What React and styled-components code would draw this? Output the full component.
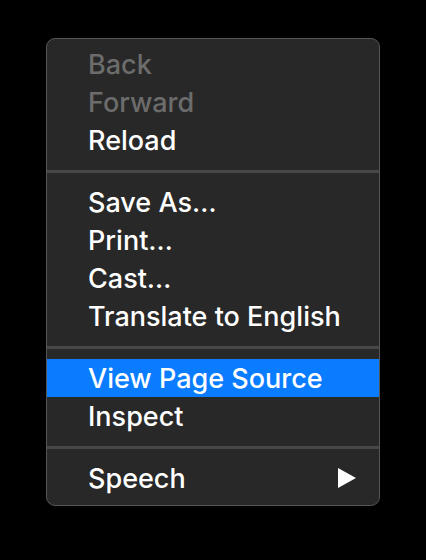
import React from 'react';
import styled, { createGlobalStyle } from 'styled-components';

const GlobalStyle = createGlobalStyle`
  html, body {
    margin: 0;
    padding: 0;
    background: #000;
  }
  body {
    font-family: Inter, "Liberation Sans", sans-serif;
  }
`;

const Page = styled.div`
  width: 426px;
  height: 560px;
  padding: 38px 0 0 46px;
  box-sizing: border-box;
`;

const Menu = styled.div`
  width: 334px;
  box-sizing: border-box;
  background: #282828;
  border: 1px solid #555;
  border-radius: 9px;
  padding: 6px 0 8px;
  display: flex;
  flex-direction: column;
  overflow: hidden;
`;

const Item = styled.div`
  height: 38px;
  display: flex;
  align-items: center;
  justify-content: space-between;
  padding: 0 23px 0 41px;
  font-size: 27px;
  font-weight: 500;
  color: ${p => (p.disabled ? '#6c6c6c' : '#fff')};
  background: ${p => (p.active ? '#0a7cff' : 'transparent')};
  white-space: nowrap;
`;

const Separator = styled.div`
  height: 3px;
  margin: 11px 0 10px;
  background: #474747;
`;

const Arrow = () => (
  <svg width="18" height="20" viewBox="0 0 18 20">
    <polygon points="0,0 18,10 0,20" fill="#fff" />
  </svg>
);

const groups = [
  [
    { label: 'Back', disabled: true },
    { label: 'Forward', disabled: true },
    { label: 'Reload' },
  ],
  [
    { label: 'Save As…' },
    { label: 'Print…' },
    { label: 'Cast…' },
    { label: 'Translate to English' },
  ],
  [
    { label: 'View Page Source', active: true },
    { label: 'Inspect' },
  ],
  [{ label: 'Speech', submenu: true }],
];

export default function App() {
  return (
    <Page>
      <GlobalStyle />
      <Menu>
        {groups.map((group, gi) => (
          <React.Fragment key={gi}>
            {gi > 0 && <Separator />}
            {group.map(item => (
              <Item key={item.label} disabled={item.disabled} active={item.active}>
                <span>{item.label}</span>
                {item.submenu && <Arrow />}
              </Item>
            ))}
          </React.Fragment>
        ))}
      </Menu>
    </Page>
  );
}
